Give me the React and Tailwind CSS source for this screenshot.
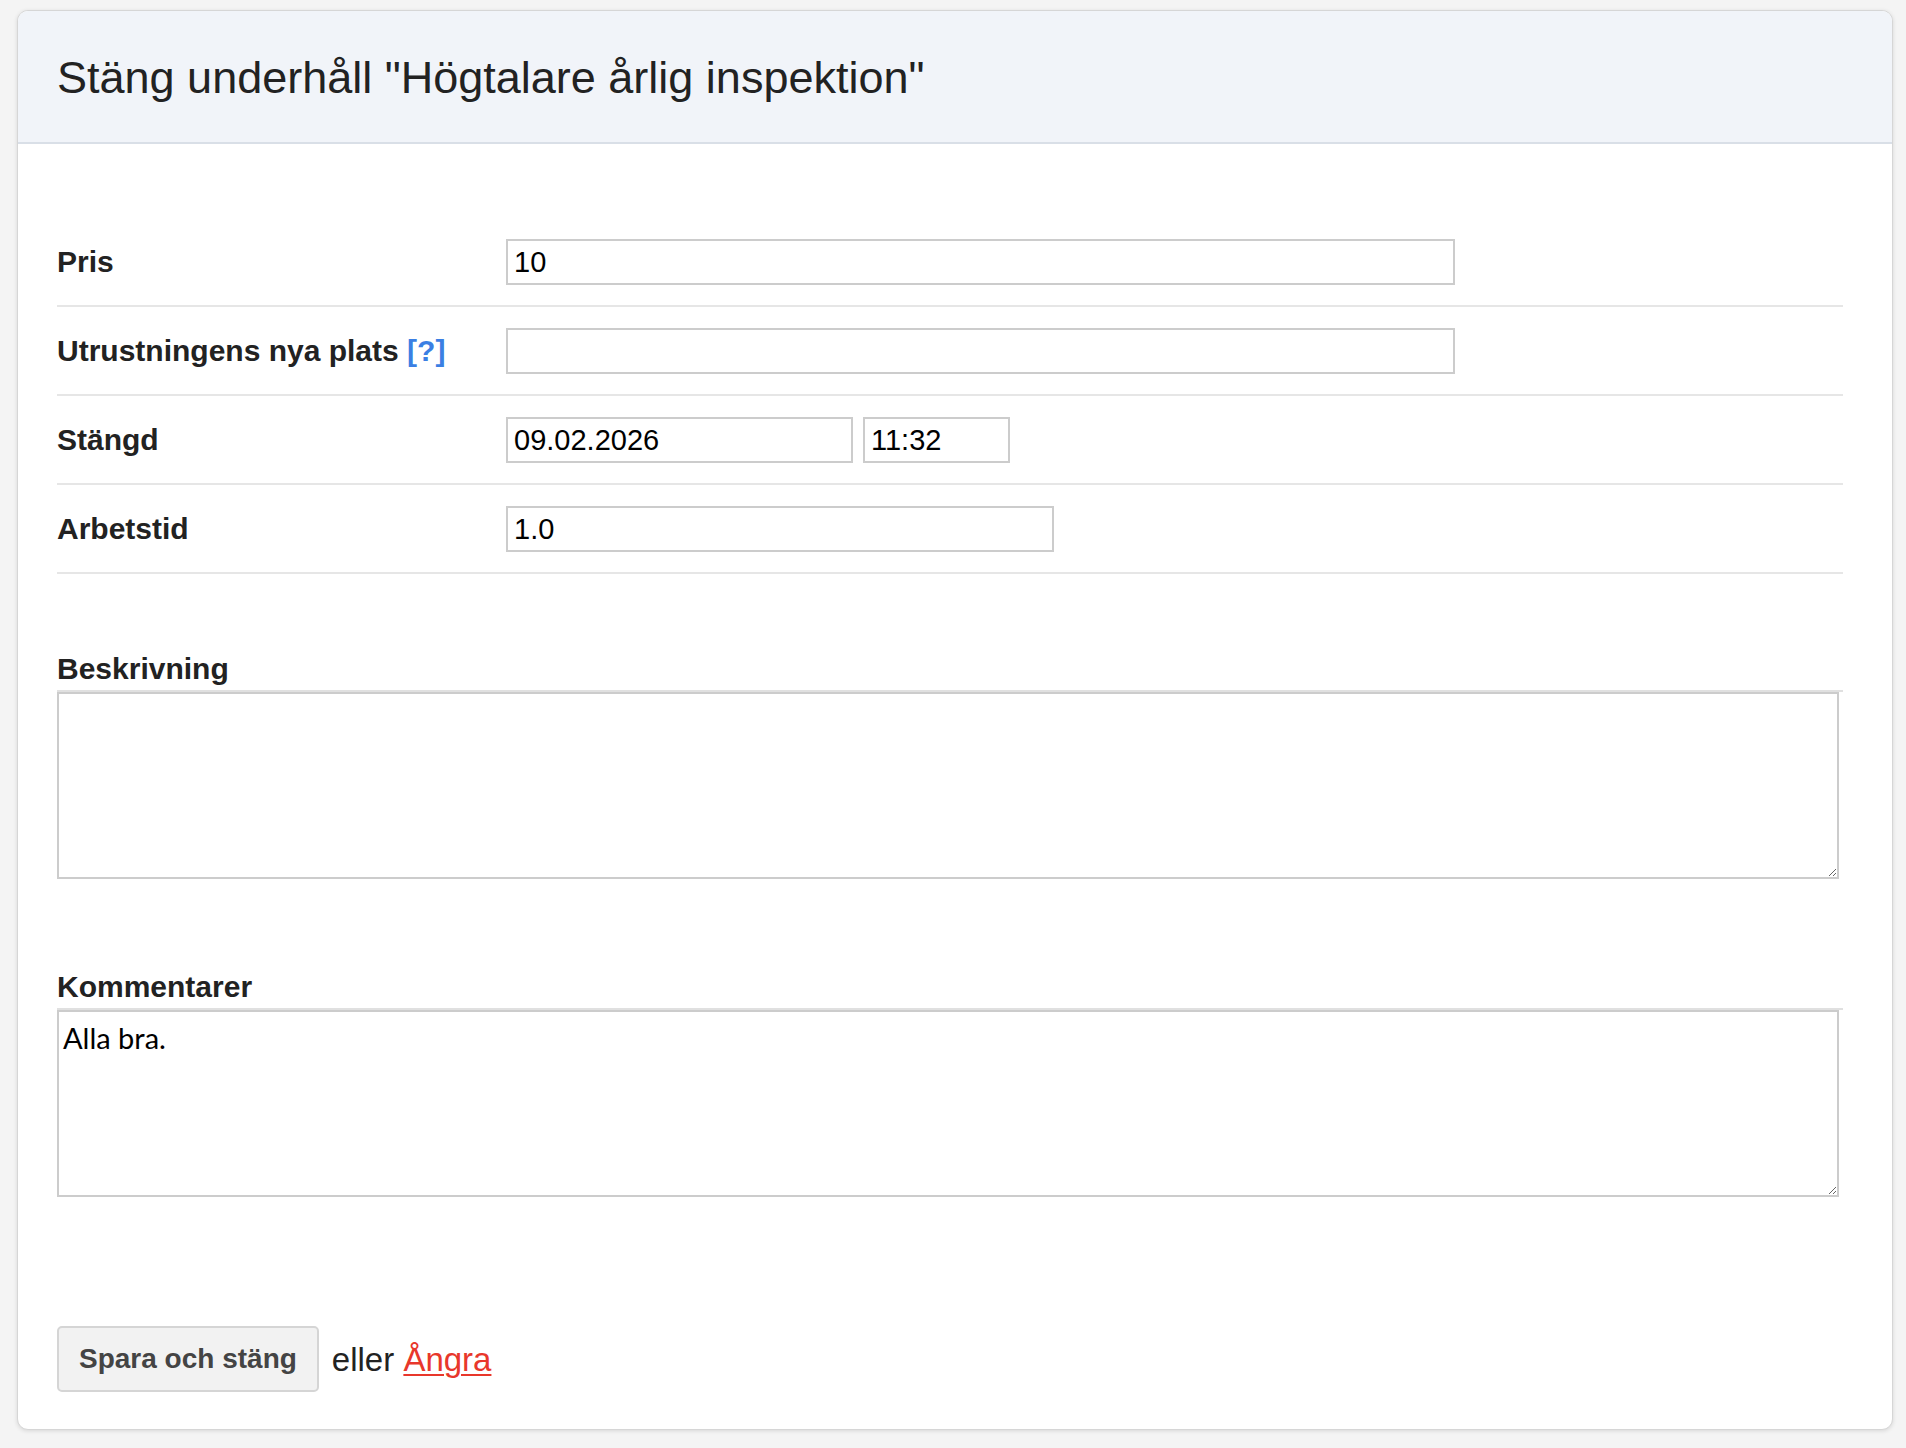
import React from 'react';

const sans = { fontFamily: '"Liberation Sans", Arial, Helvetica, sans-serif' };
const lato = { fontFamily: 'Lato, "Open Sans", sans-serif' };

const Field = ({ label, children }) => (
  <div className="flex items-center pt-[21px] pb-[20px] border-b-2 border-[#e6e6e6]">
    <div className="w-[449px] shrink-0 text-[30px] font-bold text-[#222222] leading-[34px]">{label}</div>
    <div className="flex items-center gap-[10px]">{children}</div>
  </div>
);

const TextInput = ({ value, width }) => (
  <input
    type="text"
    defaultValue={value}
    className={`${width} h-[46px] border-2 border-[#cccccc] bg-white px-[6px] text-[29px] text-black outline-none`}
    style={sans}
  />
);

const App = () => {
  return (
    <div className="min-h-screen bg-[#f4f4f4] pt-[10px] pl-[17px] pb-[17px]" style={sans}>
      <div className="w-[1876px] bg-white rounded-[11px] border border-[#d6d6d6] shadow-[0_1px_4px_rgba(0,0,0,0.12)] overflow-hidden">
        {/* Header */}
        <div className="h-[133px] flex items-center pt-[3px] pl-[39px] bg-[#f1f4f9] border-b-2 border-[#d9dfe7]">
          <h1 className="text-[45px] font-normal text-[#222222] leading-[52px]">
            Stäng underhåll "Högtalare årlig inspektion"
          </h1>
        </div>

        {/* Body */}
        <div className="pl-[39px] pr-[49px] pt-[74px] pb-[37px]">
          <Field label="Pris">
            <TextInput value="10" width="w-[949px]" />
          </Field>
          <Field
            label={
              <span>
                Utrustningens nya plats <a href="#" className="text-[#3b7fe3]">[?]</a>
              </span>
            }
          >
            <TextInput value="" width="w-[949px]" />
          </Field>
          <Field label="Stängd">
            <TextInput value="09.02.2026" width="w-[347px]" />
            <TextInput value="11:32" width="w-[147px]" />
          </Field>
          <Field label="Arbetstid">
            <TextInput value="1.0" width="w-[548px]" />
          </Field>

          <div className="mt-[78px]">
            <div className="text-[30px] font-bold text-[#222222] leading-[33px] pb-[5px] border-b-2 border-[#e0e0e0]">
              Beskrivning
            </div>
            <textarea
              className="block w-[1782px] h-[187px] border-2 border-[#cccccc] p-[4px] text-[29px] text-black outline-none"
              style={lato}
              defaultValue=""
            />
          </div>

          <div className="mt-[91px]">
            <div className="text-[30px] font-bold text-[#222222] leading-[33px] pb-[5px] border-b-2 border-[#e0e0e0]">
              Kommentarer
            </div>
            <textarea
              className="block w-[1782px] h-[187px] border-2 border-[#cccccc] p-[4px] text-[29px] text-black outline-none"
              style={lato}
              defaultValue="Alla bra."
            />
          </div>

          <div className="mt-[129px] flex items-center">
            <button className="h-[66px] px-[20px] bg-[#f2f2f2] border-2 border-[#d5d5d5] rounded-[5px] text-[28px] font-bold text-[#444444]">
              Spara och stäng
            </button>
            <span className="ml-[13px] text-[33px] text-[#222222] pt-[2px]">
              eller{' '}
              <a href="#" className="text-[#e8372b] underline decoration-2 underline-offset-[3px]">
                Ångra
              </a>
            </span>
          </div>
        </div>
      </div>
    </div>
  );
};

export default App;
